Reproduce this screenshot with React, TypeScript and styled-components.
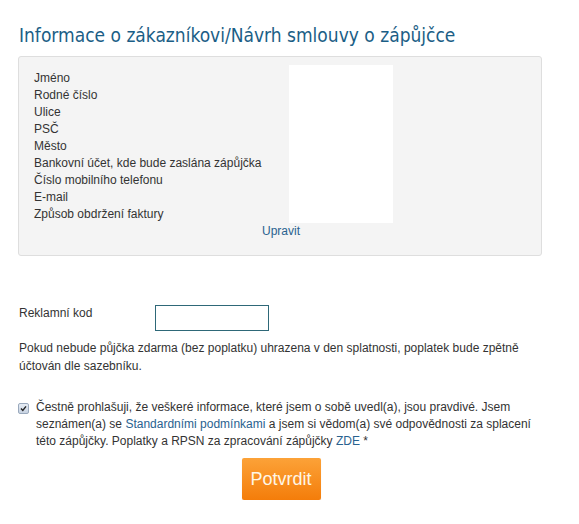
import styled, { createGlobalStyle } from "styled-components";

const GlobalStyle = createGlobalStyle`
  body {
    margin: 0;
    background: #ffffff;
    font-family: "Liberation Sans", Arial, sans-serif;
    color: #333333;
  }
`;

const Page = styled.div`
  width: 579px;
  padding: 22px 37px 0 18px;
  box-sizing: border-box;
`;

const Title = styled.h1`
  margin: 0 0 8px 1px;
  font-family: "DejaVu Sans Condensed", "Liberation Sans Narrow", sans-serif;
  font-weight: normal;
  font-size: 19px;
  line-height: 26px;
  color: #1b5e86;
`;

const Panel = styled.div`
  background: #f4f4f4;
  border: 1px solid #dedede;
  border-radius: 3px;
  padding: 8px 0 0 15px;
  height: 200px;
  box-sizing: border-box;
`;

const InfoGrid = styled.div`
  display: grid;
  grid-template-columns: 255px 104px;
  align-items: start;
`;

const LabelList = styled.div`
  padding-top: 5px;
  display: flex;
  flex-direction: column;
`;

const Label = styled.span`
  font-size: 12px;
  line-height: 17px;
`;

const ValueBox = styled.div`
  background: #ffffff;
  height: 158px;
`;

const EditLink = styled.a`
  display: block;
  width: 524px;
  margin-left: -15px;
  text-align: center;
  font-size: 12px;
  line-height: 16px;
  color: #29628f;
  text-decoration: none;
`;

const PromoRow = styled.div`
  display: flex;
  align-items: flex-start;
  margin-top: 49px;
  padding-left: 1px;
`;

const PromoLabel = styled.span`
  width: 136px;
  font-size: 12px;
  line-height: 16px;
`;

const PromoInput = styled.input`
  width: 114px;
  height: 26px;
  box-sizing: border-box;
  border: 1px solid #2e6878;
  background: #ffffff;
  outline: none;
`;

const Note = styled.p`
  margin: 8px 0 0 1px;
  font-size: 12px;
  line-height: 18px;
`;

const ConsentRow = styled.div`
  display: flex;
  align-items: flex-start;
  gap: 7px;
  margin-top: 24px;
`;

const Check = styled.span`
  flex: none;
  width: 9px;
  height: 9px;
  margin-top: 4px;
  border: 1px solid #9aa9bd;
  border-radius: 2px;
  background: linear-gradient(#e6ecf4, #c8d3e2);
  display: flex;
  align-items: center;
  justify-content: center;
`;

const ConsentText = styled.p`
  margin: 0;
  font-size: 12px;
  line-height: 17px;
`;

const Link = styled.a`
  color: #29628f;
  text-decoration: none;
`;

const ButtonRow = styled.div`
  display: flex;
  justify-content: center;
  padding-left: 2px;
  margin-top: 8px;
`;

const Submit = styled.button`
  width: 79px;
  height: 42px;
  border: none;
  border-radius: 2px;
  background: linear-gradient(#fca238, #f47d0a);
  color: #fff6e6;
  font-family: "Liberation Sans", Arial, sans-serif;
  font-size: 18px;
  padding: 0;
  box-shadow: 0 1px 1px rgba(0, 0, 0, 0.15);
`;

const labels = [
  "Jméno",
  "Rodné číslo",
  "Ulice",
  "PSČ",
  "Město",
  "Bankovní účet, kde bude zaslána zápůjčka",
  "Číslo mobilního telefonu",
  "E-mail",
  "Způsob obdržení faktury",
];

export default function App() {
  return (
    <Page>
      <GlobalStyle />
      <Title>Informace o zákazníkovi/Návrh smlouvy o zápůjčce</Title>
      <Panel>
        <InfoGrid>
          <LabelList>
            {labels.map((l) => (
              <Label key={l}>{l}</Label>
            ))}
          </LabelList>
          <ValueBox />
        </InfoGrid>
        <EditLink href="#">Upravit</EditLink>
      </Panel>
      <PromoRow>
        <PromoLabel>Reklamní kod</PromoLabel>
        <PromoInput type="text" />
      </PromoRow>
      <Note>
        Pokud nebude půjčka zdarma (bez poplatku) uhrazena v den splatnosti, poplatek bude zpětně
        účtován dle sazebníku.
      </Note>
      <ConsentRow>
        <Check>
          <svg width="7" height="7" viewBox="0 0 7 7">
            <path d="M1 3.6 L2.8 5.4 L6 1.4" fill="none" stroke="#222" strokeWidth="1.4" />
          </svg>
        </Check>
        <ConsentText>
          Čestně prohlašuji, že veškeré informace, které jsem o sobě uvedl(a), jsou pravdivé. Jsem
          seznámen(a) se <Link href="#">Standardními podmínkami</Link> a jsem si vědom(a) své
          odpovědnosti za splacení této zápůjčky. Poplatky a RPSN za zpracování zápůjčky{" "}
          <Link href="#">ZDE</Link> *
        </ConsentText>
      </ConsentRow>
      <ButtonRow>
        <Submit>Potvrdit</Submit>
      </ButtonRow>
    </Page>
  );
}
